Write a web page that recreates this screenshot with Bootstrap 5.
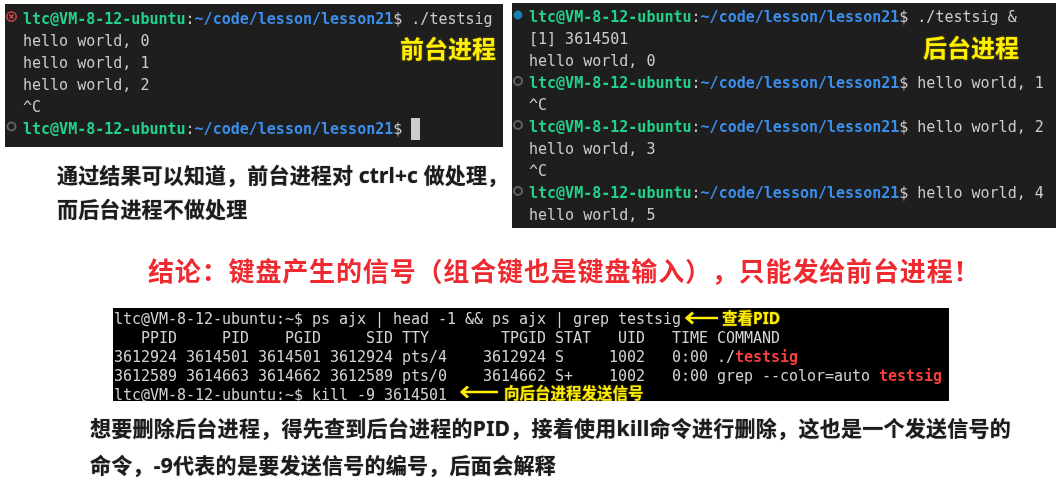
<!DOCTYPE html>
<html lang="zh-CN">
<head>
<meta charset="utf-8">
<title>前台进程与后台进程</title>
<link href="https://cdn.jsdelivr.net/npm/bootstrap@5.3.0/dist/css/bootstrap.min.css" rel="stylesheet">
<style>
html,body{background:#fff;height:489px;overflow:hidden}
body{font-family:"Noto Sans","Noto Sans CJK SC",sans-serif;color:#1c1c1c}
.sheet{padding:3px 7px 0 5px;filter:blur(.3px)}
.colleft{width:498px;padding-top:1px}
.colright{width:544px;margin-left:9px}
.vterm{background:#1e1e1e;color:#ccc;font:15px/22px "DejaVu Sans Mono",monospace}
.vleft{height:143px;padding-top:4px}
.vright{height:225px;padding-top:3px}
.tline{height:22px;display:flex;white-space:pre}
.gut{width:18px;flex:none;display:flex;align-items:center;justify-content:flex-start;padding-bottom:5px}
.vright .gut{width:17px;justify-content:center;padding-right:5px;padding-bottom:4px}
.pg{color:#23d18b;font-weight:700}
.pb{color:#3b8eea;font-weight:700}
.cursor{display:inline-block;width:9px;height:22px;background:#ccc;margin-left:9px;vertical-align:top}
.tag{position:absolute;color:#ffef00;font:700 24px/30px "Noto Sans CJK SC",sans-serif;text-shadow:0 0 2px #8a7c00;white-space:nowrap}
.tag1{left:395px;top:29px}
.tag2{left:411px;top:29px}
.note{font:700 21px/34px "Noto Sans","Noto Sans CJK SC",sans-serif;white-space:nowrap;text-shadow:0 0 1px #555}
.note1{margin:11px 0 0 52px;letter-spacing:.15px}
.headline{font:700 26px/36px "Noto Sans CJK SC",sans-serif;letter-spacing:.85px;text-spacing-trim:space-all;color:#ee2a30;margin:24px 0 0 143px;white-space:nowrap}
.xterm{width:836px;height:93px;margin:20px 0 0 108px;padding:1.5px 0 0 1px;background:#000;color:#d2d2d2;font:15px/19px "DejaVu Sans Mono",monospace;letter-spacing:-.03px;white-space:pre}
.hit{color:#f4403f;font-weight:700}
.yl{position:absolute;color:#ffef00;font:700 15.5px/14px "Noto Sans","Noto Sans CJK SC",sans-serif;letter-spacing:0;text-shadow:0 0 2px #8a7c00;white-space:nowrap}
.yl1{left:609px;top:3px}
.yl2{left:391px;top:78px}
.arw{position:absolute}
.arw1{left:571px;top:3px}
.arw2{left:346px;top:77px}
.note2{margin:9px 0 0 85px;line-height:37px;letter-spacing:.27px}
</style>
</head>
<body>
<main class="sheet">
  <div class="d-flex align-items-start">
    <div class="colleft">
      <section class="vterm vleft position-relative">
        <div class="tline"><span class="gut"><svg width="13" height="13" viewBox="0 0 13 13"><circle cx="6.500" cy="6.500" r="4.700" fill="none" stroke="#f14c4c" stroke-width="1.300"/><path d="M4.500 4.500l4 4M8.500 4.500l-4 4" stroke="#f14c4c" stroke-width="1.200"/></svg></span><span><span class="pg">ltc@VM-8-12-ubuntu</span>:<span class="pb">~/code/lesson/lesson21</span>$ ./testsig</span></div>
        <div class="tline"><span class="gut"></span><span>hello world, 0</span></div>
        <div class="tline"><span class="gut"></span><span>hello world, 1</span></div>
        <div class="tline"><span class="gut"></span><span>hello world, 2</span></div>
        <div class="tline"><span class="gut"></span><span>^C</span></div>
        <div class="tline"><span class="gut"><svg width="13" height="13" viewBox="0 0 13 13"><circle cx="6.500" cy="6.500" r="4" fill="none" stroke="#626262" stroke-width="2"/></svg></span><span><span class="pg">ltc@VM-8-12-ubuntu</span>:<span class="pb">~/code/lesson/lesson21</span>$<span class="cursor"></span></span></div>
        <div class="tag tag1">前台进程</div>
      </section>
      <div class="note note1">通过结果可以知道，前台进程对 ctrl+c 做处理，<br>而后台进程不做处理</div>
    </div>
    <section class="vterm vright colright position-relative">
      <div class="tline"><span class="gut"><svg width="10" height="10" viewBox="0 0 10 10"><circle cx="5" cy="5" r="4.400" fill="#1b80b2"/></svg></span><span><span class="pg">ltc@VM-8-12-ubuntu</span>:<span class="pb">~/code/lesson/lesson21</span>$ ./testsig &amp;</span></div>
      <div class="tline"><span class="gut"></span><span>[1] 3614501</span></div>
      <div class="tline"><span class="gut"></span><span>hello world, 0</span></div>
      <div class="tline"><span class="gut"><svg width="12" height="12" viewBox="0 0 12 12"><circle cx="6" cy="6" r="4" fill="none" stroke="#626262" stroke-width="2"/></svg></span><span><span class="pg">ltc@VM-8-12-ubuntu</span>:<span class="pb">~/code/lesson/lesson21</span>$ hello world, 1</span></div>
      <div class="tline"><span class="gut"></span><span>^C</span></div>
      <div class="tline"><span class="gut"><svg width="12" height="12" viewBox="0 0 12 12"><circle cx="6" cy="6" r="4" fill="none" stroke="#626262" stroke-width="2"/></svg></span><span><span class="pg">ltc@VM-8-12-ubuntu</span>:<span class="pb">~/code/lesson/lesson21</span>$ hello world, 2</span></div>
      <div class="tline"><span class="gut"></span><span>hello world, 3</span></div>
      <div class="tline"><span class="gut"></span><span>^C</span></div>
      <div class="tline"><span class="gut"><svg width="12" height="12" viewBox="0 0 12 12"><circle cx="6" cy="6" r="4" fill="none" stroke="#626262" stroke-width="2"/></svg></span><span><span class="pg">ltc@VM-8-12-ubuntu</span>:<span class="pb">~/code/lesson/lesson21</span>$ hello world, 4</span></div>
      <div class="tline"><span class="gut"></span><span>hello world, 5</span></div>
      <div class="tag tag2">后台进程</div>
    </section>
  </div>
  <h1 class="headline mb-0">结论：键盘产生的信号（组合键也是键盘输入），只能发给前台进程！</h1>
  <section class="xterm position-relative overflow-hidden"><div>ltc@VM-8-12-ubuntu:~$ ps ajx | head -1 &amp;&amp; ps ajx | grep testsig</div><div>   PPID     PID    PGID     SID TTY        TPGID STAT   UID   TIME COMMAND</div><div>3612924 3614501 3614501 3612924 pts/4    3612924 S     1002   0:00 ./<span class="hit">testsig</span></div><div>3612589 3614663 3614662 3612589 pts/0    3614662 S+    1002   0:00 grep --color=auto <span class="hit">testsig</span></div><div>ltc@VM-8-12-ubuntu:~$ kill -9 3614501</div><svg class="arw arw1" width="35" height="14" viewBox="0 0 35 14"><path d="M9 1.500L3 7l6 5.500" fill="none" stroke="#ffef00" stroke-width="3"/><path d="M4 7h30" stroke="#ffef00" stroke-width="2.400"/></svg><span class="yl yl1">查看PID</span><svg class="arw arw2" width="40" height="14" viewBox="0 0 40 14"><path d="M9 1.500L3 7l6 5.500" fill="none" stroke="#ffef00" stroke-width="3"/><path d="M4 7h35" stroke="#ffef00" stroke-width="2.400"/></svg><span class="yl yl2">向后台进程发送信号</span></section>
  <div class="note note2">想要删除后台进程，得先查到后台进程的PID，接着使用kill命令进行删除，这也是一个发送信号的<br>命令，-9代表的是要发送信号的编号，后面会解释</div>
</main>
<script src="https://cdn.jsdelivr.net/npm/bootstrap@5.3.0/dist/js/bootstrap.bundle.min.js"></script>
</body>
</html>
